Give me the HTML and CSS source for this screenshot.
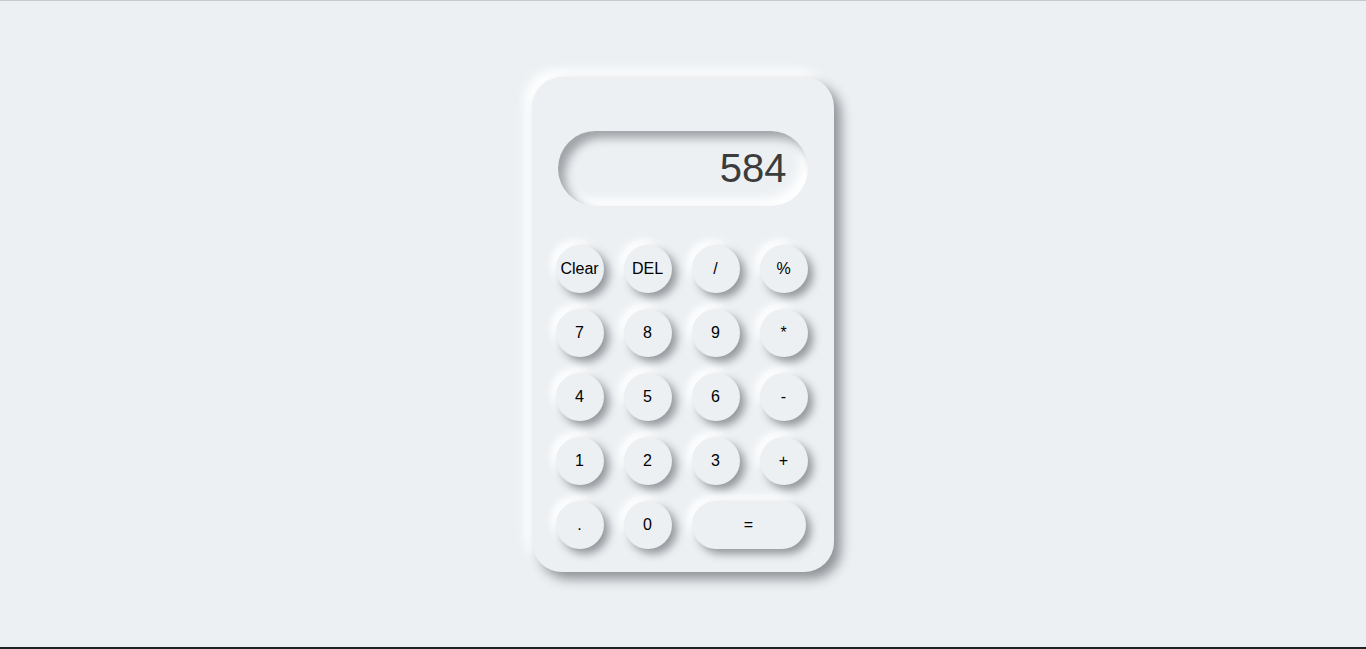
FILE: index.html
```html
<!DOCTYPE html>
<html>
<head>
<meta charset="utf-8">
<link rel="stylesheet" href="styles.css">
</head>
<body>
<div class="page">
  <div class="calc">
    <div class="display">584</div>
    <div class="keys">
      <button class="key">Clear</button>
      <button class="key">DEL</button>
      <button class="key">/</button>
      <button class="key">%</button>
      <button class="key">7</button>
      <button class="key">8</button>
      <button class="key">9</button>
      <button class="key">*</button>
      <button class="key">4</button>
      <button class="key">5</button>
      <button class="key">6</button>
      <button class="key">-</button>
      <button class="key">1</button>
      <button class="key">2</button>
      <button class="key">3</button>
      <button class="key">+</button>
      <button class="key">.</button>
      <button class="key">0</button>
      <button class="key wide">=</button>
    </div>
  </div>
</div>
</body>
</html>
```
FILE: styles.css
```css
html, body {
  margin: 0;
  padding: 0;
  height: 100%;
}
body {
  background: #ecf0f3;
  font-family: "Liberation Sans", Arial, sans-serif;
  box-sizing: border-box;
  border-top: 1px solid #c9c9c9;
  border-bottom: 2px solid #202124;
  overflow: hidden;
}
.page {
  display: flex;
  justify-content: center;
  padding-top: 76px;
  padding-right: 1px;
}
.calc {
  width: 302px;
  height: 495px;
  box-sizing: border-box;
  border-radius: 30px;
  background: #ecf0f3;
  box-shadow: 7px 7px 12px #8f9296, -7px -7px 12px #ffffff;
  padding: 54px 26px 0 26px;
}
.display {
  height: 75px;
  border-radius: 38px;
  box-shadow: inset 7px 7px 10px #a0a3a7, inset -7px -7px 12px #ffffff;
  box-sizing: border-box;
  padding-right: 21px;
  display: flex;
  align-items: center;
  justify-content: flex-end;
  font-size: 40px;
  color: #3c3c3c;
}
.keys {
  margin-top: 39px;
  margin-left: -2px;
  display: grid;
  grid-template-columns: repeat(4, 48px);
  grid-auto-rows: 48px;
  column-gap: 20px;
  row-gap: 16px;
}
.key {
  width: 48px;
  height: 48px;
  border: none;
  border-radius: 50%;
  background: #ecf0f3;
  box-shadow: 5px 5px 9px #94979b, -5px -5px 9px #ffffff;
  font-family: "Liberation Sans", Arial, sans-serif;
  font-size: 16px;
  color: #000;
  padding: 0;
  display: flex;
  align-items: center;
  justify-content: center;
}
.key.wide {
  grid-column: span 2;
  width: 114px;
  border-radius: 24px;
}
```
